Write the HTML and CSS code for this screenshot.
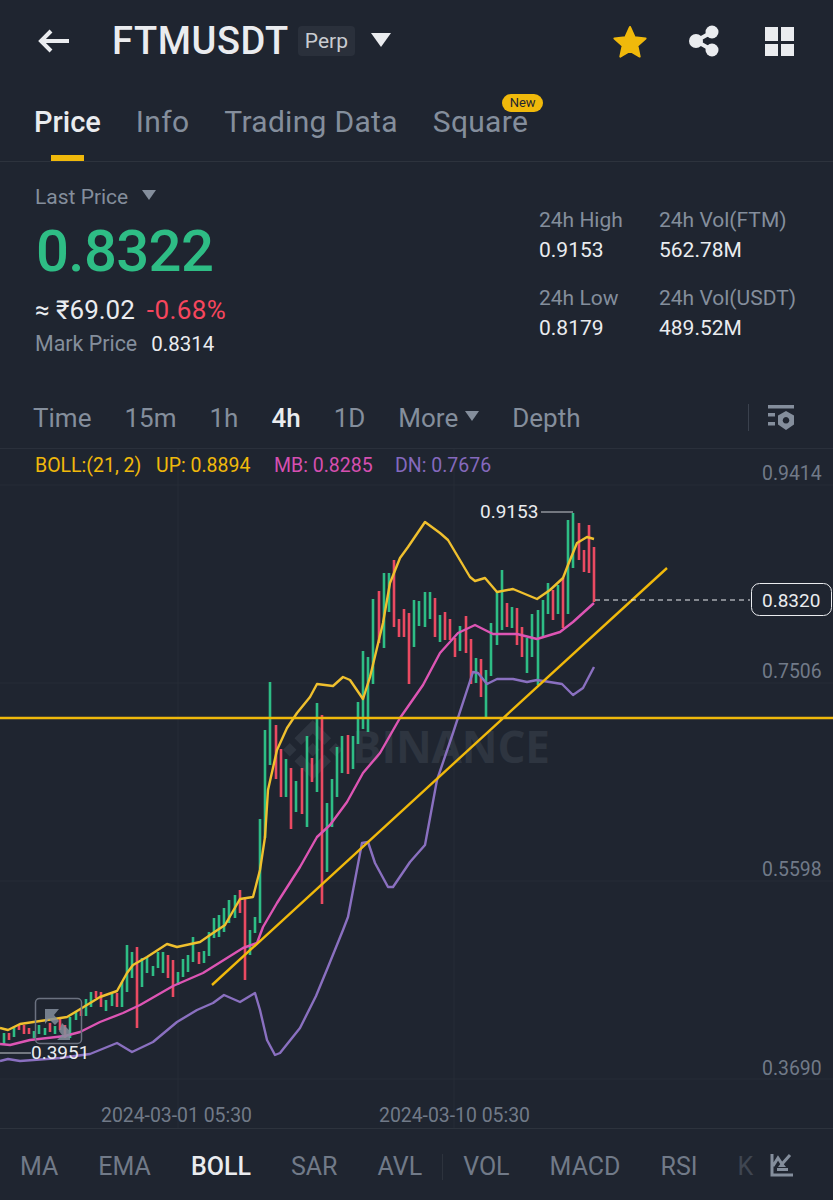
FILE: index.html
```html
<!DOCTYPE html>
<html lang="en">
<head>
  <meta charset="UTF-8" />
  <meta name="viewport" content="width=device-width, initial-scale=1.0"/>
  <title>FTMUSDT Perp</title>
  <link rel="stylesheet" href="styles.css">
</head>
<body>

<!-- Top Bar -->
<div class="topbar">
  <svg class="back" viewBox="0 0 34 26"><path d="M32 13H5M14 3 4 13l10 10"/></svg>
  <h1 class="symbol">FTMUSDT</h1>
  <span class="perp">Perp</span>
  <span class="caret caret-white"></span>
  <div class="actions">
    <svg class="star" viewBox="0 0 36 34"><path d="M18 3l4.600 10.200 11 1.200-8.200 7.400 2.300 10.800L18 27l-9.700 5.600 2.300-10.800-8.200-7.400 11-1.200z"/></svg>
    <svg class="share" viewBox="0 0 32 32"><path class="share-line" d="M24 7 8 16l16 9"/><circle cx="24" cy="7" r="6.500"/><circle cx="8" cy="16" r="7"/><circle cx="24" cy="25" r="6.500"/></svg>
    <div class="layout-icon"><span></span><span></span><span></span><span></span></div>
  </div>
</div>

<!-- Tabs -->
<div class="tabs">
  <span class="tab active">Price</span>
  <span class="tab">Info</span>
  <span class="tab">Trading Data</span>
  <span class="tab">Square<em class="badge">New</em></span>
</div>

<!-- Price Stats -->
<div class="stats">
  <div class="price-col">
    <div class="last-label">Last Price <span class="caret caret-gray"></span></div>
    <div class="last-price">0.8322</div>
    <div class="fiat">≈ ₹69.02<span class="change">-0.68%</span></div>
    <div class="mark"><span class="mark-label">Mark Price</span>0.8314</div>
  </div>
  <div class="stat-grid">
    <div class="stat"><span>24h High</span><b>0.9153</b></div>
    <div class="stat"><span>24h Vol(FTM)</span><b>562.78M</b></div>
    <div class="stat"><span>24h Low</span><b>0.8179</b></div>
    <div class="stat"><span>24h Vol(USDT)</span><b>489.52M</b></div>
  </div>
</div>

<!-- Intervals -->
<div class="intervals">
  <span>Time</span>
  <span>15m</span>
  <span>1h</span>
  <span class="on">4h</span>
  <span>1D</span>
  <span class="more">More<i class="caret caret-gray"></i></span>
  <span>Depth</span>
  <div class="interval-tools">
    <svg class="settings" viewBox="0 0 28 26"><path d="M1 0h26v3.500H1zM1 8h7v3.500H1zM1 17h7v3.500H1z"/><path fill-rule="evenodd" d="M19 6l8 4.500v9L19 25l-8-5.500v-9zM19 12a3.300 3.300 0 1 0 .01 0z"/></svg>
  </div>
</div>

<!-- Chart: viewBox uses page coordinates -->
<svg class="chart" viewBox="0 449 833 679">
  <path class="grid" d="M178 449V1128M454 449V1128M0 485H833M0 683H833M0 881H833M0 1079H833"/>

  <g class="watermark">
    <path transform="translate(283 720) scale(.47)" d="M38.730 53.200l24.590-24.580 24.600 24.600 14.300-14.310L63.320 0 24.420 38.900zM0 63.310l14.300-14.310 14.310 14.310-14.310 14.300zM38.730 73.410l24.590 24.590 24.600-24.600 14.310 14.290-38.900 38.910-38.910-38.880zM98 63.310l14.300-14.310 14.310 14.300-14.310 14.320zM77.830 63.300L63.320 48.780 48.810 63.280l14.510 14.500z"/>
    <text x="352" y="763" textLength="198">BINANCE</text>
  </g>

  <path class="candle-up" d="M4 1033V1045M14 1027V1037M34 1031V1038M39 1025V1034M45 1028V1035M55 1026V1034M70 1017V1038M76 1012V1020M86 999V1016M91 992V1007M106 1000V1011M112 994V1006M122 982V1007M127 945V992M132 952V978M142 958V987M147 957V973M153 966V976M158 952V968M163 952V973M178 972V985M183 959V977M188 955V972M193 937V962M204 951V963M209 932V956M214 918V938M219 915V937M224 908V932M229 900V923M235 895V918M250 930V955M255 917V933M260 819V923M265 730V838M270 682V765M286 759V797M296 781V812M307 736V827M317 703V792M327 803V872M332 779V827M337 747V797M342 736V773M353 736V769M358 702V744M363 651V729M368 657V732M373 599V684M384 573V648M389 573V612M414 600V647M419 601V626M425 592V627M430 592V619M440 615V642M460 626V651M476 658V683M486 670V718M491 623V676M497 592V645M502 570V630M512 607V628M527 638V673M532 614V657M538 610V685M543 600V638M548 583V614M558 585V614M568 520V614M573 513V568"/>
  <path class="candle-down" d="M9 1033V1040M19 1025V1030M24 1025V1034M29 1028V1034M50 1023V1032M60 1019V1030M65 1025V1038M81 1009V1016M96 991V998M101 992V1007M117 993V1007M137 947V1028M168 955V978M173 960V997M199 952V964M240 890V913M245 897V980M276 725V779M281 749V797M291 768V829M302 768V814M312 758V782M322 715V904M348 735V774M379 591V643M394 560V627M399 619V637M404 609V637M409 613V684M435 598V637M445 612V640M450 619V640M455 638V657M466 616V653M471 639V684M481 659V697M507 603V627M517 608V645M522 627V657M553 590V620M563 578V628M579 523V560M584 550V572M589 525V573M594 547V602"/>

  <polyline class="band band-dn" points="0,1061 8,1059 20,1061 60,1058 90,1054 117,1043 132,1052 153,1042 177,1022 197,1010 213,1003 224,995 240,1002 255,993 260,1010 267,1040 275,1055 280,1053 300,1028 316,996 328,967 343,930 348,917 362,843 368,842 375,863 388,887 393,887 410,862 425,845 437,780 453,733 473,672 478,673 487,684 497,679 513,679 527,682 537,680 562,684 573,695 583,688 594,667"/>
  <polyline class="band band-mb" points="0,1044 10,1045 30,1040 65,1036 80,1032 100,1022 123,1013 140,1005 173,986 203,973 227,958 243,948 257,943 263,927 277,903 300,867 317,837 330,825 347,802 363,773 380,753 400,718 423,685 440,653 458,633 475,625 493,634 517,634 537,639 560,632 573,622 594,603"/>
  <polyline class="band band-up" points="0,1028 8,1030 20,1024 67,1017 82,1008 100,997 117,991 127,973 133,965 147,957 167,944 177,947 200,942 213,933 225,925 240,899 253,897 260,870 265,837 268,790 277,750 287,728 297,713 310,697 317,684 333,686 343,677 350,680 363,699 370,677 383,623 390,583 400,558 408,547 425,522 440,533 448,540 470,577 475,581 485,578 497,592 513,589 537,599 550,590 563,578 568,565 577,543 587,537 594,539"/>

  <path class="drawn" d="M0 718H833M212 985 667 568"/>

  <!-- High / low markers and current price -->
  <path class="marker" d="M541 512H573M0 1053H31"/>
  <text class="marker-text" x="480" y="518">0.9153</text>
  <text class="marker-text" x="31" y="1059">0.3951</text>
  <path class="price-dash" d="M595 600H750"/>
  <rect class="price-box" x="751.500" y="583.500" width="80" height="32" rx="8"/>
  <text class="marker-text" x="762" y="607">0.8320</text>

  <!-- Expand button -->
  <rect class="expand-box" x="35.500" y="998.500" width="46" height="45" rx="4"/>
  <path class="expand-arrow" d="M45 1009h14l-5 6 5 6-4 4-6-6-4 5zM62 1023l7 7 1-4v14H57l5-5-3-4z"/>

  <!-- Indicator legend -->
  <text class="legend legend-up" x="35" y="472">BOLL:(21, 2)</text>
  <text class="legend legend-up" x="156" y="472">UP: 0.8894</text>
  <text class="legend legend-mb" x="274" y="472">MB: 0.8285</text>
  <text class="legend legend-dn" x="395" y="472">DN: 0.7676</text>

  <!-- Axis labels -->
  <text class="axis" x="762" y="480">0.9414</text>
  <text class="axis" x="762" y="678">0.7506</text>
  <text class="axis" x="762" y="876">0.5598</text>
  <text class="axis" x="762" y="1075">0.3690</text>
  <text class="axis" x="101" y="1122">2024-03-01 05:30</text>
  <text class="axis" x="379" y="1122">2024-03-10 05:30</text>
</svg>

<!-- Indicators -->
<div class="indicators">
  <span>MA</span>
  <span>EMA</span>
  <span class="on">BOLL</span>
  <span>SAR</span>
  <span>AVL</span>
  <i class="sep"></i>
  <span>VOL</span>
  <span>MACD</span>
  <span>RSI</span>
  <span class="fade">K</span>
  <svg class="indicator-icon" viewBox="0 0 24 24"><path class="icon-line" d="M2 1V22H23M3 13 8 5l4 6 8-9"/><path class="icon-fill" d="M7 15h11v3H7zM12 9l4 5H8z"/></svg>
</div>

</body>
</html>
```

FILE: styles.css
```css
* {
  box-sizing: border-box;
  margin: 0;
  padding: 0;
}

body {
  font-family: Roboto, "Noto Sans", sans-serif;
  background: #1f2530;
  color: #eaecef;
  width: 833px;
  height: 1200px;
  overflow: hidden;
}

/* top bar */
.topbar {
  display: flex;
  align-items: center;
  height: 82px;
  padding-left: 37px;
}

.back {
  width: 34px;
  height: 26px;
  margin-right: 41px;
  fill: none;
  stroke: #eaecef;
  stroke-width: 4;
}

.symbol {
  font-size: 38px;
  font-weight: 500;
  letter-spacing: 0.6px;
}

.perp {
  margin-left: 9px;
  padding: 0 7px;
  height: 30px;
  line-height: 30px;
  font-size: 21px;
  color: #c9ccd1;
  background: #2a303b;
  border-radius: 4px;
}

.caret {
  display: inline-block;
  width: 0;
  height: 0;
  border-style: solid;
  border-color: transparent;
  border-width: 0;
}

.caret-white {
  margin-left: 16px;
  margin-top: -2px;
  border-width: 14px 10px 0;
  border-top-color: #eaecef;
}

.caret-gray {
  border-width: 10px 7px 0;
  border-top-color: #848e9c;
}

.actions {
  display: flex;
  align-items: center;
  margin-left: auto;
  padding-right: 39px;
}

.star {
  width: 36px;
  height: 34px;
  fill: #f0b90b;
  stroke: #f0b90b;
  stroke-width: 2;
  stroke-linejoin: round;
}

.share {
  width: 32px;
  height: 32px;
  margin-left: 40px;
  fill: #eaecef;
}

.share-line {
  fill: none;
  stroke: #eaecef;
  stroke-width: 4;
}

.layout-icon {
  display: grid;
  grid-template-columns: 13px 13px;
  grid-template-rows: 14px 12px;
  gap: 3px;
  margin-left: 45px;
}

.layout-icon span {
  background: #eaecef;
}

/* tabs */
.tabs {
  display: flex;
  align-items: center;
  gap: 35px;
  height: 80px;
  padding: 0 0 0 34px;
  border-bottom: 1px solid #2d333d;
}

.tab {
  position: relative;
  font-size: 30px;
  letter-spacing: 0.3px;
  color: #848e9c;
}

.tab.active {
  font-size: 29px;
  letter-spacing: 0;
  font-weight: 500;
  color: #eaecef;
}

.tab.active::after {
  content: "";
  position: absolute;
  left: 17px;
  width: 33px;
  height: 6px;
  bottom: -22px;
  background: #f0b90b;
}

.badge {
  position: absolute;
  right: -15px;
  top: -10px;
  width: 41px;
  height: 18px;
  line-height: 18px;
  text-align: center;
  font-size: 13px;
  font-style: normal;
  letter-spacing: 0;
  color: #1f2530;
  background: #f0b90b;
  border-radius: 9px;
}

/* price stats */
.stats {
  display: flex;
  justify-content: space-between;
  height: 227px;
  padding: 22px 34px 0 35px;
}

.last-label {
  font-size: 21px;
  line-height: 26px;
  color: #848e9c;
}

.last-label .caret {
  margin-left: 9px;
  vertical-align: 4px;
}

.last-price {
  margin: 11px 0 0 1px;
  font-size: 58px;
  line-height: 60px;
  font-weight: 500;
  letter-spacing: -0.6px;
  color: #2ebd85;
}

.fiat {
  margin-top: 14px;
  font-size: 26px;
  line-height: 30px;
}

.change {
  margin-left: 12px;
  letter-spacing: 0.4px;
  color: #f6465d;
}

.mark {
  margin-top: 6px;
  font-size: 20.5px;
  line-height: 26px;
}

.mark-label {
  margin-right: 14px;
  font-size: 21.400px;
  color: #848e9c;
}

.stat-grid {
  display: grid;
  grid-template-columns: 120px 140px;
  row-gap: 22px;
  padding-top: 23px;
  align-content: start;
}

.stat span {
  display: block;
  font-size: 21px;
  line-height: 26px;
  color: #848e9c;
}

.stat b {
  display: block;
  margin-top: 4px;
  font-size: 21px;
  line-height: 26px;
  font-weight: 400;
}

/* intervals */
.intervals {
  display: flex;
  align-items: center;
  gap: 33px;
  height: 60px;
  padding: 0 0 2px 33px;
  font-size: 26px;
  color: #848e9c;
  border-bottom: 1px solid #2a303b;
}

.intervals .on {
  font-weight: 500;
  color: #eaecef;
}

.more .caret {
  margin-left: 7px;
  vertical-align: 6px;
}

.interval-tools {
  display: flex;
  align-items: center;
  height: 27px;
  margin-left: auto;
  padding: 0 38px 0 18px;
  border-left: 1px solid #3a414d;
}

.settings {
  width: 28px;
  height: 26px;
  fill: #848e9c;
}

/* chart */
.chart {
  display: block;
  width: 833px;
  height: 679px;
}

.grid {
  fill: none;
  stroke: #262c37;
  stroke-width: 1;
}

.watermark {
  fill: #2e3540;
}

.watermark text {
  font-family: "Open Sans", sans-serif;
  font-size: 44px;
  font-weight: 700;
}

.candle-up,
.candle-down {
  fill: none;
  stroke-width: 2.600;
}

.candle-up {
  stroke: #2ebd85;
}

.candle-down {
  stroke: #ea4a62;
}

.band {
  fill: none;
  stroke-width: 2.400;
  stroke-linejoin: round;
}

.band-up {
  stroke: #f0c02e;
}

.band-mb {
  stroke: #dd55b4;
}

.band-dn {
  stroke: #8a70c0;
}

.drawn {
  fill: none;
  stroke: #f0b90b;
  stroke-width: 2.400;
}

.marker {
  fill: none;
  stroke: #c9ccd1;
  stroke-width: 1;
}

.marker-text {
  font-size: 19px;
  fill: #eaecef;
}

.price-dash {
  fill: none;
  stroke: #eaecef;
  stroke-width: 1;
  stroke-dasharray: 5 4;
}

.price-box {
  fill: #1f2530;
  stroke: #eaecef;
  stroke-width: 1;
}

.expand-box {
  fill: none;
  stroke: #6b7280;
  stroke-width: 1.500;
}

.expand-arrow {
  fill: #848e9c;
  opacity: 0.85;
}

.legend {
  font-size: 19.500px;
}

.legend-up {
  fill: #f0b90b;
}

.legend-mb {
  fill: #d64fb0;
}

.legend-dn {
  fill: #8569bd;
}

.axis {
  font-size: 19.400px;
  fill: #717a88;
}

/* indicators */
.indicators {
  position: relative;
  display: flex;
  align-items: center;
  gap: 40px;
  height: 72px;
  padding: 4px 0 0 20px;
  font-size: 25px;
  color: #717a88;
  border-top: 1px solid #2d333d;
}

.indicators .on {
  font-weight: 500;
  color: #eaecef;
}

.sep {
  width: 1px;
  height: 26px;
  margin: 0 -20px;
  background: #2d333d;
}

.fade {
  color: #3f4651;
}

.indicator-icon {
  position: absolute;
  left: 770px;
  top: 24px;
  width: 24px;
  height: 24px;
}

.icon-line {
  fill: none;
  stroke: #848e9c;
  stroke-width: 3;
}

.icon-fill {
  fill: #848e9c;
}
```
